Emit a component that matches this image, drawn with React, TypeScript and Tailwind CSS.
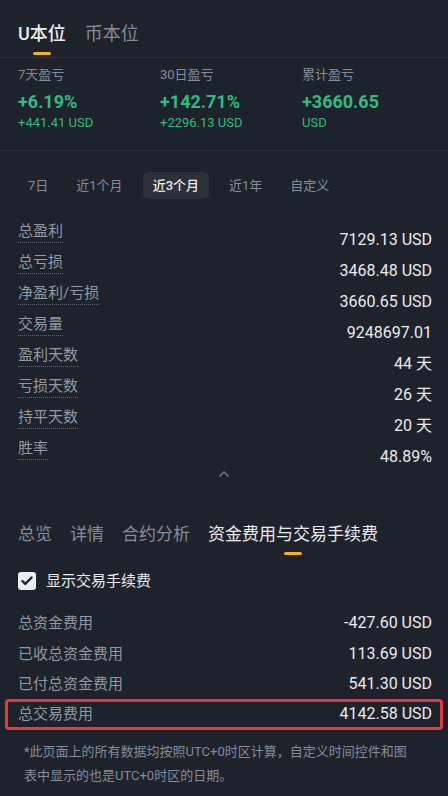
import { Check, ChevronUp } from 'lucide-react';

const font = { fontFamily: 'Roboto, "Noto Sans CJK SC", sans-serif' };

const stats = [
  { label: '7天盈亏', value: '+6.19%', sub: '+441.41 USD' },
  { label: '30日盈亏', value: '+142.71%', sub: '+2296.13 USD' },
  { label: '累计盈亏', value: '+3660.65', sub: 'USD' },
];

const periods = ['7日', '近1个月', '近3个月', '近1年', '自定义'];

const summary = [
  ['总盈利', '7129.13 USD'],
  ['总亏损', '3468.48 USD'],
  ['净盈利/亏损', '3660.65 USD'],
  ['交易量', '9248697.01'],
  ['盈利天数', '44 天'],
  ['亏损天数', '26 天'],
  ['持平天数', '20 天'],
  ['胜率', '48.89%'],
];

const fees = [
  ['总资金费用', '-427.60 USD'],
  ['已收总资金费用', '113.69 USD'],
  ['已付总资金费用', '541.30 USD'],
];

export default function App() {
  return (
    <div className="w-[448px] min-h-[796px] bg-[#1e222a] text-[#eaecef]" style={font}>
      {/* 本位 tabs */}
      <div className="flex gap-[19px] px-[18px] pt-[21px] border-b border-[#2b3039]">
        <div className="flex flex-col items-center">
          <span className="text-[18px] leading-[26px] font-medium text-[#eaecef]">U本位</span>
          <span className="mt-[5px] mb-[2px] w-[18px] h-[3px] rounded-full bg-[#f0b90b]" />
        </div>
        <span className="text-[18px] leading-[26px] text-[#848e9c]">币本位</span>
      </div>

      {/* pnl stats */}
      <div className="grid grid-cols-[142px_142px_1fr] px-[18px] pt-[8px] pb-[17px] border-b border-[#2b3039]">
        {stats.map((s) => (
          <div key={s.label} className="flex flex-col">
            <span className="text-[13px] leading-[18px] text-[#848e9c]">{s.label}</span>
            <span className="mt-[6px] text-[18px] leading-[23px] font-bold text-[#2ebd85]">{s.value}</span>
            <span className="text-[13px] leading-[20px] text-[#2ebd85]">{s.sub}</span>
          </div>
        ))}
      </div>

      {/* period chips */}
      <div className="flex items-center gap-[12px] px-[20px] pt-[21px] pb-[21px]">
        {periods.map((p) => (
          <span
            key={p}
            className={
              p === '近3个月'
                ? 'px-[10px] h-[27px] flex items-center rounded-md bg-[#2b3039] text-[13px] font-medium text-[#eaecef]'
                : 'px-[8px] h-[27px] flex items-center text-[13px] text-[#848e9c]'
            }
          >
            {p}
          </span>
        ))}
      </div>

      {/* summary rows */}
      <div className="flex flex-col pl-[18px] pr-[16px]">
        {summary.map(([label, value]) => (
          <div key={label} className="flex justify-between h-[31px]">
            <span className="self-start text-[15px] leading-[22px] text-[#929aa5] border-b border-dotted border-[#5e6673]">
              {label}
            </span>
            <span className="self-end text-[16px] leading-[22px] text-[#eaecef]">{value}</span>
          </div>
        ))}
      </div>
      <div className="flex justify-center -mt-[2px] pb-[40px]">
        <ChevronUp size={16} strokeWidth={3} className="text-[#5e6673]" />
      </div>

      {/* section tabs */}
      <div className="flex gap-[18px] px-[18px]">
        {['总览', '详情', '合约分析'].map((t) => (
          <span key={t} className="text-[17px] leading-[24px] text-[#848e9c]">{t}</span>
        ))}
        <div className="flex flex-col items-center">
          <span className="text-[17px] leading-[24px] text-[#eaecef]">资金费用与交易手续费</span>
          <span className="mt-[6px] w-[18px] h-[3px] rounded-full bg-[#f0b90b]" />
        </div>
      </div>

      {/* checkbox */}
      <div className="flex items-center gap-[10px] px-[18px] pt-[16px]">
        <span className="w-[18px] h-[18px] rounded-[3px] bg-[#eaecef] flex items-center justify-center">
          <Check size={14} strokeWidth={4} className="text-[#1e222a]" />
        </span>
        <span className="text-[15px] leading-[20px] text-[#eaecef]">显示交易手续费</span>
      </div>

      {/* fee rows */}
      <div className="flex flex-col pt-[17px]">
        {fees.map(([label, value]) => (
          <div key={label} className="flex justify-between items-center h-[30.5px] pl-[18px] pr-[16px]">
            <span className="text-[15px] text-[#929aa5]">{label}</span>
            <span className="text-[16px] text-[#eaecef]">{value}</span>
          </div>
        ))}
        <div className="mx-[5px] -mt-[1px] flex justify-between items-center h-[31px] pl-[10px] pr-[8px] border-[3px] border-[#e5393f] rounded-[4px]">
          <span className="text-[15px] text-[#929aa5]">总交易费用</span>
          <span className="text-[16px] text-[#eaecef]">4142.58 USD</span>
        </div>
      </div>

      {/* note */}
      <p className="pl-[24px] pr-[36px] pt-[10px] pb-[12px] text-[13px] leading-[24px] text-[#848e9c]">
        *此页面上的所有数据均按照UTC+0时区计算，自定义时间控件和图表中显示的也是UTC+0时区的日期。
      </p>
    </div>
  );
}
